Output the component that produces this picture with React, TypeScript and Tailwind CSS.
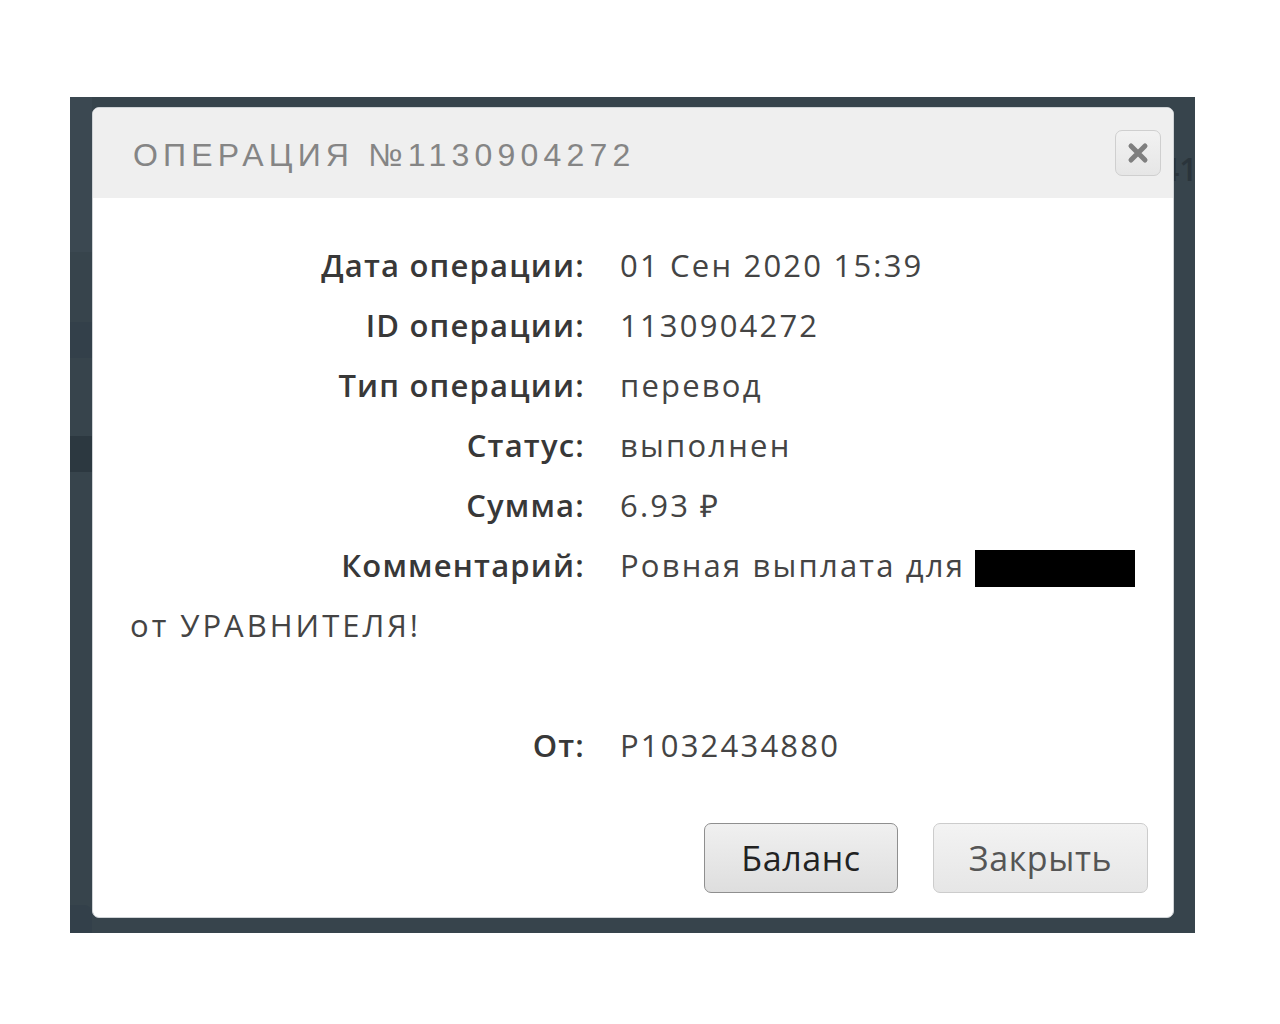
import React from "react";

function Row({ label, children }: { label: string; children?: React.ReactNode }) {
  return (
    <div className="h-[60px] leading-[60px] whitespace-nowrap">
      <span className="inline-block w-[455px] text-right font-semibold text-[#383838] tracking-[1.2px]">{label}</span>
      <span className="ml-[35px] text-[#444] tracking-[2.2px]">{children}</span>
    </div>
  );
}

export default function App() {
  return (
    <div className="min-h-[1024px] w-[1280px] bg-white pt-[97px] pl-[70px]">
      <div className="relative w-[1125px] h-[836px] bg-[#37444c] pt-[10px] pl-[22px]">
        {/* faint background content */}
        <div className="absolute left-0 top-0 w-[22px] h-[155px] bg-[#3b4851]" />
        <div className="absolute left-0 top-[225px] w-[22px] h-[36px] bg-[#33404a]" />
        <div className="absolute left-0 top-[339px] w-[22px] h-[36px] bg-[#2c3840]" />
        <div className="absolute left-0 top-[808px] w-[22px] h-[28px] bg-[#33404a] rounded-tr-[8px]" />
        <div className="absolute left-[1091px] top-[56px] text-[32px] font-semibold leading-none text-[#2a343b] font-['Open_Sans'] whitespace-nowrap">
          41
        </div>
        <div
          className="relative w-[1082px] h-[811px] bg-white rounded-[7px] border border-[#cfd3d6] overflow-hidden"
          style={{ fontFamily: "'Open Sans', sans-serif" }}
        >
          <div className="h-[90px] bg-[#efefef] flex items-center justify-between pl-[40px] pr-[12px]">
            <div
              className="text-[32px] tracking-[5.2px] text-[#858585] leading-none pt-[4px]"
              style={{ fontFamily: "'Liberation Sans', sans-serif" }}
            >
              ОПЕРАЦИЯ №1130904272
            </div>
            <button className="w-[46px] h-[46px] rounded-[7px] border border-[#cfcfcf] bg-gradient-to-b from-[#f2f2f2] to-[#e6e6e6] flex items-center justify-center">
              <svg width="24" height="24" viewBox="0 0 24 24">
                <path d="M5 5 L19 19 M19 5 L5 19" stroke="#7f7f7f" strokeWidth="5" strokeLinecap="round" />
              </svg>
            </button>
          </div>
          <div className="pt-[37px] pl-[37px] text-[31px]">
            <Row label="Дата операции:">01 Сен 2020 15:39</Row>
            <Row label="ID операции:">1130904272</Row>
            <Row label="Тип операции:">перевод</Row>
            <Row label="Статус:">выполнен</Row>
            <Row label="Сумма:">6.93 ₽</Row>
            <Row label="Комментарий:">
              Ровная выплата для{" "}
              <span className="inline-block align-middle w-[160px] h-[37px] bg-black" />
            </Row>
            <div className="h-[60px] leading-[60px] text-[#444] tracking-[3px]">от УРАВНИТЕЛЯ!</div>
            <div className="h-[60px]" />
            <Row label="От:">P1032434880</Row>
          </div>
          <div className="flex justify-end gap-[35px] pr-[25px] mt-[48px]">
            <button className="w-[194px] h-[70px] rounded-[7px] border border-[#8f8f8f] bg-gradient-to-b from-[#f0f0f0] to-[#dedede] text-[34px] tracking-[0.6px] text-[#222]">
              Баланс
            </button>
            <button className="w-[215px] h-[70px] rounded-[7px] border border-[#cccccc] bg-gradient-to-b from-[#f3f3f3] to-[#e6e6e6] text-[34px] tracking-[0.6px] text-[#555]">
              Закрыть
            </button>
          </div>
        </div>
      </div>
    </div>
  );
}
